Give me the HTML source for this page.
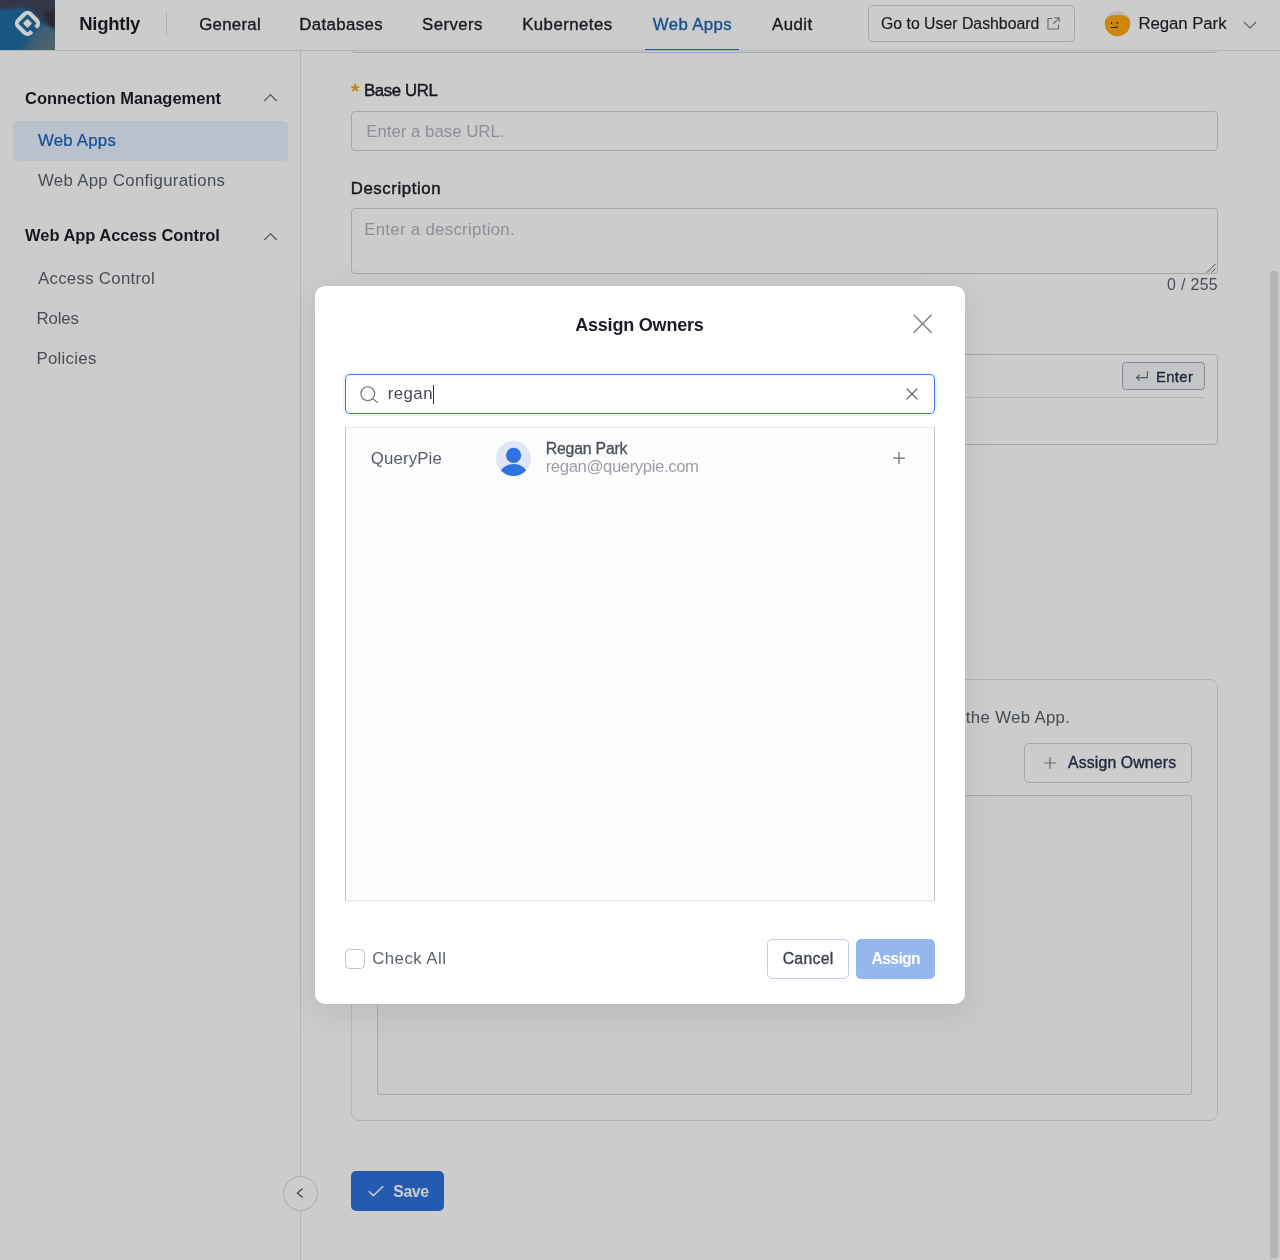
<!DOCTYPE html>
<html lang="en">
<head>
<meta charset="utf-8">
<title>Assign Owners</title>
<style>
*{box-sizing:border-box;margin:0;padding:0}
html,body{width:1280px;height:1260px;overflow:hidden;background:#fff}
body{font-family:"Liberation Sans",sans-serif;color:#1c1f26;position:relative}
.abs{position:absolute}
.t{position:absolute;white-space:nowrap;line-height:1}
#main,#side,#hdr,#modal{will-change:transform}
#app{position:absolute;left:0;top:0;width:1280px;height:1260px;background:#fff;overflow:hidden}
#mask{position:absolute;left:0;top:0;width:1280px;height:1260px;background:rgba(0,0,0,.2)}
#hdr{position:absolute;left:0;top:0;width:1280px;height:51px;border-bottom:1px solid #e0e2e6;background:#fff}
#logo{position:absolute;left:0;top:0;width:55px;height:50px;background:#206da1;overflow:hidden}
#side{position:absolute;left:0;top:51px;width:301px;height:1209px;border-right:1px solid #e0e2e6;background:#fff}
.box{position:absolute;border:1px solid #cdd1d9;border-radius:4px;background:#fff}
.btn{position:absolute;border:1px solid #cdd1d9;border-radius:5px;background:#fff}
#modal{position:absolute;left:315px;top:286px;width:650px;height:718px;background:#fff;border-radius:10px;box-shadow:0 8px 30px 4px rgba(0,0,0,.07)}
#thumb{position:absolute;left:1270px;top:271px;width:8px;height:987px;border-radius:3px;background:#b3b4b6}
</style>
</head>
<body>
<div id="app">
  <div id="main">
    <div class="box" style="left:351px;top:12px;width:867px;height:41px"></div>
    <div class="t" id="t_ast" style="left:351px;top:80.00px;font-size:21px;color:#f0a81a;font-weight:700;">*</div>
    <div class="t" id="t_baseurl" style="left:364.0px;top:83.00px;font-size:16.8px;color:#1c1f26;-webkit-text-stroke:0.45px #1c1f26;letter-spacing:-0.369px;">Base URL</div>
    <div class="box" style="left:351px;top:111px;width:867px;height:40px"></div>
    <div class="t" id="t_ph1" style="left:366.2px;top:124.00px;font-size:16.8px;color:#b0b5be;letter-spacing:0.015px;">Enter a base URL.</div>
    <div class="t" id="t_desc" style="left:350.68px;top:181.00px;font-size:16.8px;color:#1c1f26;-webkit-text-stroke:0.45px #1c1f26;letter-spacing:0.598px;">Description</div>
    <div class="box" style="left:351px;top:208px;width:867px;height:66px"></div>
    <svg class="abs" style="left:1206px;top:263px" width="10" height="10" viewBox="0 0 10 10" stroke="#5b626e" stroke-width="1" fill="none"><path d="M1 9.5L9.5 1M5.5 9.5L9.5 5.5"/></svg>
    <div class="t" id="t_ph2" style="left:364.2px;top:222.00px;font-size:16.8px;color:#b0b5be;letter-spacing:0.308px;">Enter a description.</div>
    <div class="t" id="t_cnt" style="left:1167.0px;top:277.00px;font-size:15.9px;color:#5b626e;letter-spacing:0.342px;">0 / 255</div>
    <div class="box" style="left:351px;top:354px;width:867px;height:91px"></div>
    <div class="btn" style="left:1122px;top:362px;width:83px;height:28px;background:#f6f7f9;border-color:#a3aaba;border-radius:3.5px"></div>
    <svg class="abs" style="left:1135px;top:370px" width="14" height="12" viewBox="0 0 14 12" fill="none" stroke="#6d737d" stroke-width="1.2"><path d="M12.4 1.2V7.6H1.6M4.8 4.6L1.6 7.6L4.8 10.6"/></svg>
    <div class="t" id="t_enter" style="left:1156.0px;top:370.00px;font-size:14.8px;color:#2b3150;-webkit-text-stroke:0.35px #2b3150;letter-spacing:0.36px;">Enter</div>
    <div class="abs" style="left:364px;top:397px;width:841px;height:1px;background:#dfe2e7"></div>
    <div class="box" style="left:351px;top:679px;width:867px;height:442px;border-radius:8px;border-color:#dee1e5"></div>
    <div class="t" id="t_desc2" style="left:965.84px;top:710.00px;font-size:16.8px;color:#586068;letter-spacing:0.331px;">the Web App.</div>
    <div class="btn" style="left:1024px;top:743px;width:168px;height:40px"></div>
    <svg class="abs" style="left:1043px;top:756px" width="14" height="14" viewBox="0 0 14 14" fill="none" stroke="#7b818c" stroke-width="1.2"><path d="M7 1.2V12.8M1.2 7H12.8"/></svg>
    <div class="t" id="t_assignbtn" style="left:1068.0px;top:755.00px;font-size:15.8px;color:#2b3150;-webkit-text-stroke:0.35px #2b3150;letter-spacing:0.15px;">Assign Owners</div>
    <div class="box" style="left:377px;top:795px;width:815px;height:300px;border-radius:2px;background:#fcfcfc;border-color:#cfd2d8"></div>
    <div class="abs" style="left:351px;top:1171px;width:93px;height:40px;border-radius:5px;background:#2e72dc"></div>
    <svg class="abs" style="left:367px;top:1184px" width="18" height="14" viewBox="0 0 18 14" fill="none" stroke="#fff" stroke-width="1.5"><path d="M1.8 7.2L6.4 11.6L16.2 2.2"/></svg>
    <div class="t" id="t_save" style="left:393.2px;top:1184.00px;font-size:15.8px;color:#ffffff;font-weight:700;letter-spacing:-0.332px;">Save</div>
  </div>
  <div id="side">
    <div class="t" id="t_cm" style="left:25.0px;top:39.00px;font-size:16.5px;color:#1c1f26;font-weight:700;letter-spacing:-0.012px;">Connection Management</div>
    <svg class="abs" style="left:263px;top:42px" width="15" height="9" viewBox="0 0 15 9" fill="none" stroke="#6d737d" stroke-width="1.3"><path d="M1.3 8L7.5 1.6L13.7 8"/></svg>
    <div class="abs" style="left:13px;top:70px;width:275px;height:39.5px;border-radius:5px;background:#e6f2ff"></div>
    <div class="t" id="t_swebapps" style="left:38.0px;top:82.00px;font-size:16.8px;color:#1a62c0;-webkit-text-stroke:0.2px #1a62c0;letter-spacing:0.228px;">Web Apps</div>
    <div class="t" id="t_swac" style="left:38.0px;top:122.00px;font-size:16.8px;color:#5b626e;letter-spacing:0.302px;">Web App Configurations</div>
    <div class="t" id="t_wac" style="left:25.0px;top:176.00px;font-size:16.5px;color:#1c1f26;font-weight:700;letter-spacing:-0.031px;">Web App Access Control</div>
    <svg class="abs" style="left:263px;top:180.5px" width="15" height="9" viewBox="0 0 15 9" fill="none" stroke="#6d737d" stroke-width="1.3"><path d="M1.3 8L7.5 1.6L13.7 8"/></svg>
    <div class="t" id="t_ac" style="left:38.0px;top:220.00px;font-size:16.8px;color:#5b626e;letter-spacing:0.297px;">Access Control</div>
    <div class="t" id="t_roles" style="left:36.4px;top:260.00px;font-size:16.8px;color:#5b626e;letter-spacing:-0.105px;">Roles</div>
    <div class="t" id="t_pol" style="left:36.4px;top:300.00px;font-size:16.8px;color:#5b626e;letter-spacing:0.305px;">Policies</div>
    <div class="abs" style="left:283px;top:1125px;width:35px;height:35px;border-radius:50%;border:1px solid #d2d4d9;background:#fff"></div>
    <svg class="abs" style="left:295px;top:1136px" width="10" height="12" viewBox="0 0 10 12" fill="none" stroke="#555b66" stroke-width="1.3"><path d="M7.6 1.4L2.4 6L7.6 10.6"/></svg>
  </div>
  <div id="hdr">
    <div id="logo">
      <svg width="55" height="50" viewBox="0 0 55 50">
        <defs>
          <filter id="lb" x="-20%" y="-20%" width="140%" height="140%"><feGaussianBlur stdDeviation="1.6"/></filter>
          <linearGradient id="lt" x1="24" y1="30" x2="55" y2="50" gradientUnits="userSpaceOnUse"><stop offset="0" stop-color="#9c8a72" stop-opacity="0"/><stop offset=".45" stop-color="#9c8a72" stop-opacity=".38"/><stop offset="1" stop-color="#9c8a72" stop-opacity=".6"/></linearGradient>
        </defs>
        <rect width="55" height="50" fill="#206da1"/>
        <path d="M18 52L28 40L38 28L46 24L58 28V52Z" fill="url(#lt)" filter="url(#lb)"/>
        <path d="M-4 -4H60V33L41 21.5L31 9.5L20 8L-4 9.5Z" fill="#42455a" filter="url(#lb)"/>
        <path d="M43 12L58 10V28L48 24Z" fill="#1c1d2a" opacity=".45" filter="url(#lb)"/>
        <g transform="translate(27.5 23.4) rotate(45)">
          <path fill="#fff" fill-rule="evenodd" d="M-4.55 -10.75H4.55A6.2 6.2 0 0 1 10.75 -4.55V4.55A6.2 6.2 0 0 1 4.55 10.75H-4.55A6.2 6.2 0 0 1 -10.75 4.55V-4.55A6.2 6.2 0 0 1 -4.55 -10.75ZM-5.30 -6.60H5.30A1.3 1.3 0 0 1 6.60 -5.30V5.30A1.3 1.3 0 0 1 5.30 6.60H-5.30A1.3 1.3 0 0 1 -6.60 5.30V-5.30A1.3 1.3 0 0 1 -5.30 -6.60Z"/>
          <rect x="-3.25" y="-3.25" width="6.5" height="6.5" rx=".8" fill="#fff"/>
          <rect x="5.6" y="-3.1" width="6.4" height="5.8" fill="#206da1"/>
        </g>
      </svg>
    </div>
    <div class="t" id="t_nightly" style="left:79.2px;top:15.00px;font-size:18.5px;color:#1c1f26;font-weight:700;letter-spacing:-0.252px;">Nightly</div>
    <div class="abs" style="left:166px;top:11px;width:1px;height:25px;background:#dcdee3"></div>
    <div class="t" id="t_general" style="left:199.2px;top:17.00px;font-size:16.8px;color:#21242c;-webkit-text-stroke:0.35px #21242c;letter-spacing:0.298px;">General</div>
    <div class="t" id="t_databases" style="left:299.2px;top:17.00px;font-size:16.8px;color:#21242c;-webkit-text-stroke:0.35px #21242c;letter-spacing:0.389px;">Databases</div>
    <div class="t" id="t_servers" style="left:422.0px;top:17.00px;font-size:16.8px;color:#21242c;-webkit-text-stroke:0.35px #21242c;letter-spacing:0.441px;">Servers</div>
    <div class="t" id="t_kube" style="left:522.2px;top:17.00px;font-size:16.8px;color:#21242c;-webkit-text-stroke:0.35px #21242c;letter-spacing:0.455px;">Kubernetes</div>
    <div class="t" id="t_webapps" style="left:652.8px;top:17.00px;font-size:16.8px;color:#1f66b3;-webkit-text-stroke:0.35px #1f66b3;letter-spacing:0.37px;">Web Apps</div>
    <div class="t" id="t_audit" style="left:772.0px;top:17.00px;font-size:16.8px;color:#21242c;-webkit-text-stroke:0.35px #21242c;letter-spacing:0.47px;">Audit</div>
    <div class="abs" style="left:645px;top:49px;width:94px;height:1.2px;background:#2f6fdc"></div>
    <div class="btn" style="left:868px;top:5px;width:207px;height:37px"></div>
    <div class="t" id="t_goto" style="left:881.0px;top:16.00px;font-size:15.8px;color:#21242c;-webkit-text-stroke:0.15px #21242c;letter-spacing:0.013px;">Go to User Dashboard</div>
    <svg class="abs" style="left:1046px;top:16px" width="15" height="15" viewBox="0 0 15 15" fill="none" stroke="#7b818c" stroke-width="1.1"><path d="M6.5 2.5H2V13H12.5V8.5"/><path d="M8.5 1.8H13.2V6.5M13.2 1.8L7.2 7.8"/></svg>
    <svg class="abs" style="left:1104px;top:10px" width="28" height="28" viewBox="0 0 28 28">
      <defs><clipPath id="avc"><circle cx="13.5" cy="13.5" r="12.7"/></clipPath></defs>
      <g clip-path="url(#avc)"><rect width="28" height="28" fill="#e6e9f0"/><rect x="0" y="4.9" width="27" height="26" rx="10" fill="#ffab12"/></g>
      <rect x="6.9" y="12" width="1.2" height="2" fill="#1d1a22"/><path d="M12.3 12H13.8V14.1H13.2Z" fill="#1d1a22"/><path d="M7 17.1H12.8L13.4 16.2L13.9 16.6L13.2 18H7Z" fill="#1d1a22"/>
    </svg>
    <div class="t" id="t_regan" style="left:1138.4px;top:16.00px;font-size:16.8px;color:#21242c;-webkit-text-stroke:0.15px #21242c;letter-spacing:-0.053px;">Regan Park</div>
    <svg class="abs" style="left:1242px;top:19px" width="16" height="10" viewBox="0 0 16 10" fill="none" stroke="#737983" stroke-width="1.25"><path d="M1.9 3L8 8.9L14.1 3"/></svg>
  </div>
</div>
<div id="mask"></div>
<div id="thumb"></div>
<div id="modal">
    <div class="t" id="t_mtitle" style="left:260.2px;top:30.00px;font-size:18px;color:#1a1d24;font-weight:700;letter-spacing:-0.201px;">Assign Owners</div>
    <svg class="abs" style="left:597px;top:27px" width="21" height="21" viewBox="0 0 21 21" fill="none" stroke="#7c7c80" stroke-width="1.3"><path d="M1.6 1.8L19.6 19.8M19.6 1.8L1.6 19.8"/></svg>
    <div class="abs" style="left:30px;top:88px;width:590px;height:40px;border:1px solid #3f7fe2;border-radius:5px;box-shadow:0 0 0 2px rgba(63,127,226,.10)"></div>
    <svg class="abs" style="left:44px;top:98.5px" width="20" height="20" viewBox="0 0 20 20" fill="none" stroke="#6e7177" stroke-width="1.15"><circle cx="8.8" cy="8.6" r="6.9"/><path d="M13.8 13.6L18.6 17.8"/></svg>
    <div class="t" id="t_q" style="left:72.7px;top:100.00px;font-size:16.8px;color:#444950;letter-spacing:0.475px;">regan</div>
    <div class="abs" style="left:118px;top:98.5px;width:1px;height:19.5px;background:#333"></div>
    <svg class="abs" style="left:590px;top:101.19999999999999px" width="14" height="14" viewBox="0 0 14 14" fill="none" stroke="#55585e" stroke-width="1.25"><path d="M1.6 1.6L12.4 12.4M12.4 1.6L1.6 12.4"/></svg>
    <div class="abs" style="left:30px;top:140.5px;width:590px;height:474.5px;background:#fcfcfc;border:1px solid #c6c6c7;border-top:1px solid #e4e9f3;border-bottom:1px solid #d5e0f0"></div>
    <div class="t" id="t_qp" style="left:55.7px;top:165.00px;font-size:16.8px;color:#555c66;letter-spacing:0.164px;">QueryPie</div>
    <svg class="abs" style="left:181px;top:155px" width="35" height="35" viewBox="0 0 35 35">
      <defs><clipPath id="uc"><circle cx="17.5" cy="17.5" r="17.5"/></clipPath></defs>
      <circle cx="17.5" cy="17.5" r="17.5" fill="#dfe5f2"/>
      <g clip-path="url(#uc)" fill="#2f72e0"><circle cx="17.6" cy="14.3" r="7.6"/><ellipse cx="17.6" cy="33" rx="13.4" ry="9.9"/></g>
    </svg>
    <div class="t" id="t_rname" style="left:230.7px;top:155.00px;font-size:15.8px;color:#4b525b;-webkit-text-stroke:0.33px #4b525b;letter-spacing:-0.18px;">Regan Park</div>
    <div class="t" id="t_rmail" style="left:230.7px;top:173.00px;font-size:16.7px;color:#9b9ea4;letter-spacing:-0.385px;">regan@querypie.com</div>
    <svg class="abs" style="left:577px;top:165px" width="14" height="14" viewBox="0 0 14 14" fill="none" stroke="#6a6d73" stroke-width="1.25"><path d="M7 1.1V12.9M1.1 7H12.9"/></svg>
    <div class="abs" style="left:30px;top:663px;width:20px;height:20px;border:1px solid #bcc5d3;border-radius:4.5px;background:#fff"></div>
    <div class="t" id="t_chk" style="left:57.2px;top:665.00px;font-size:16.8px;color:#5b626e;letter-spacing:0.478px;">Check All</div>
    <div class="abs" style="left:452px;top:653px;width:82px;height:40px;border:1px solid #c4d0e4;border-radius:5px;background:#fff"></div>
    <div class="t" id="t_cancel" style="left:467.7px;top:665.00px;font-size:15.8px;color:#3b424d;-webkit-text-stroke:0.35px #3b424d;letter-spacing:0.268px;">Cancel</div>
    <div class="abs" style="left:541px;top:653px;width:79px;height:40px;border-radius:5px;background:#94b8ee"></div>
    <div class="t" id="t_assign" style="left:556.5px;top:665.00px;font-size:15.8px;color:#ffffff;font-weight:700;letter-spacing:-0.697px;">Assign</div>
  </div>
</body>
</html>
